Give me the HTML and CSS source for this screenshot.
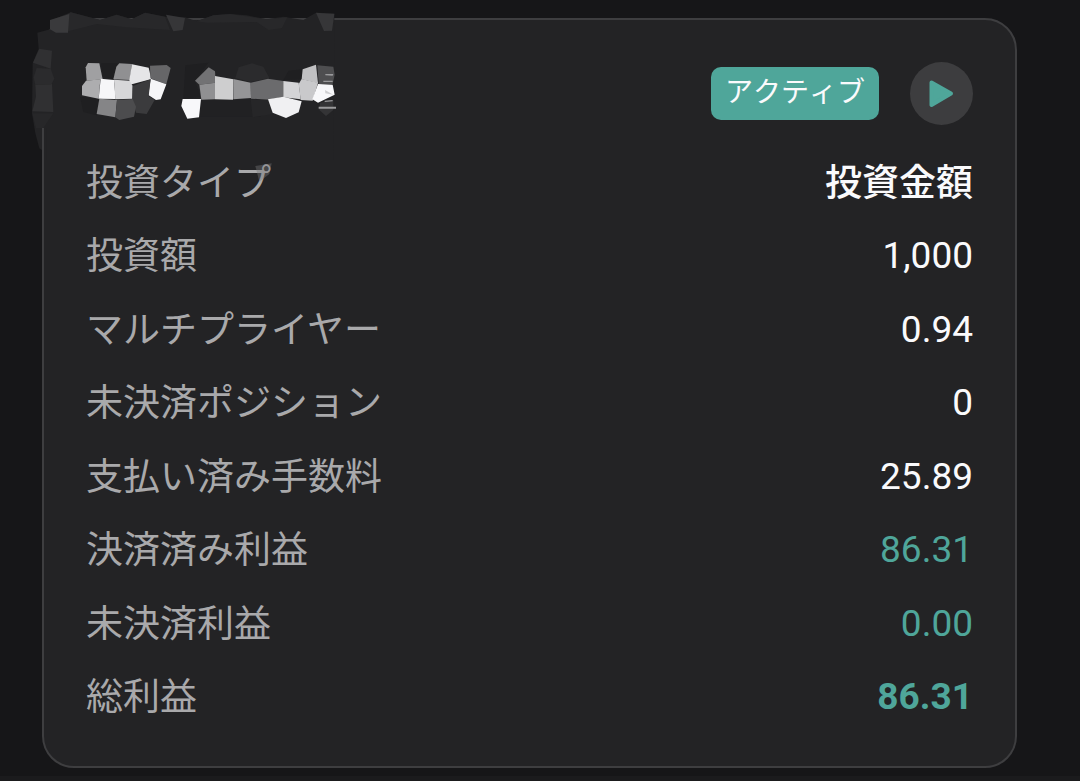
FILE: index.html
```html
<!DOCTYPE html>
<html lang="ja">
<head>
<meta charset="utf-8">
<meta name="viewport" content="width=device-width, initial-scale=1">
<title>投資</title>
<link rel="stylesheet" href="styles.css">
</head>
<body>
<main class="page">
  <section class="card">
    <header class="card-header">
      <span class="badge">アクティブ</span>
      <button class="play" type="button" aria-label="開始">
        <svg class="play-icon" viewBox="0 0 63 63" aria-hidden="true"><path d="M21.500 20.500 L41 31.500 L21.500 43 Z"/></svg>
      </button>
    </header>
    <dl class="details">
      <dt>投資タイプ</dt><dd class="strong">投資金額</dd>
      <dt>投資額</dt><dd>1,000</dd>
      <dt>マルチプライヤー</dt><dd>0.94</dd>
      <dt>未決済ポジション</dt><dd>0</dd>
      <dt>支払い済み手数料</dt><dd>25.89</dd>
      <dt>決済済み利益</dt><dd class="gain">86.31</dd>
      <dt>未決済利益</dt><dd class="gain">0.00</dd>
      <dt>総利益</dt><dd class="gain total">86.31</dd>
    </dl>
  </section>
  <svg class="mosaic" viewBox="0 0 1080 630" aria-hidden="true">
    <path fill="#232325" d="M150 62 L212 37 L300 60 L350 44 L395 58 L435 38 L495 50 L555 52 L590 64 L640 46 L690 42 L740 46 L800 58 L850 50 L910 60 L948 38 L1003 40 L1003 110 L1000 480 L140 480 L140 384 L126 384 L126 450 L118 445 L106 400 L96 340 L98 190 L116 146 L112 98 L150 88 Z"/>
    <path fill="#28282a" d="M200 44 L212 37 L300 60 L350 44 L395 58 L435 38 L495 50 L510 90 L380 82 L290 72 L205 94 Z M590 64 L640 46 L690 42 L800 58 L862 52 L846 84 L806 90 L770 66 L620 68 Z"/>
    <path fill="#3a3a3c" d="M150 60 L208 42 L204 98 L168 98 L150 88 Z"/>
    <path fill="#363638" d="M498 44 L555 54 L548 90 L520 94 Z M948 38 L1003 42 L996 92 L972 93 Z"/>
    <path fill="#303032" d="M118 146 L156 152 L152 206 L99 188 Z M106 254 L156 252 L160 336 L97 334 L108 290 Z"/>
    <path fill="#2b2b2d" d="M110 204 L152 206 L163 236 L154 254 L106 254 L101 232 Z"/>
    <path fill="#272729" d="M97 340 L160 340 L130 384 L108 384 Z"/>
    <path fill="#1f1f21" d="M240 290 L298 296 L290 346 L250 336 Z M304 190 L352 190 L340 238 L308 230 Z M556 196 L625 188 L585 242 L602 290 L550 296 Z M866 212 L908 208 L905 238 L850 240 Z"/>
    <path fill="#212123" d="M706 296 L808 298 L780 350 L600 350 L604 300 Z"/>
    <path fill="#2b2b2d" d="M716 202 L756 190 L790 200 L808 234 L752 246 L706 234 Z"/>
    <path fill="#262628" d="M752 298 L804 300 L820 342 L758 352 Z"/>
    <path fill="#a0a0a2" d="M264 189 L298 190 L308 238 L260 242 L257 202 Z"/>
    <path fill="#adadaf" d="M258 242 L301 238 L296 296 L246 286 L246 258 Z"/>
    <path fill="#909092" d="M358 190 L396 192 L390 240 L340 238 L349 200 Z"/>
    <path fill="#e5e5e7" d="M396 193 L446 203 L454 237 L390 254 L388 240 Z"/>
    <path fill="#666668" d="M450 197 L500 195 L512 204 L499 253 L451 235 Z"/>
    <path fill="#f6f6f8" d="M302 236 L342 240 L347 297 L296 296 Z M452 236 L499 253 L482 298 L468 300 L445 285 Z"/>
    <path fill="#d7d7d9" d="M342 239 L389 242 L398 258 L397 296 L346 298 Z"/>
    <path fill="#3b3b3d" d="M398 258 L452 238 L446 288 L464 300 L440 342 L408 338 L397 296 Z"/>
    <path fill="#858587" d="M298 296 L351 300 L346 352 L290 342 Z"/>
    <path fill="#4c4c4e" d="M351 300 L398 297 L408 320 L402 350 L358 360 L346 352 Z"/>
    <path fill="#727274" d="M626 202 L645 214 L647 248 L598 254 L585 242 Z"/>
    <path fill="#909092" d="M598 254 L646 248 L645 298 L604 299 Z"/>
    <path fill="#cececf" d="M645 228 L700 238 L699 299 L645 298 Z"/>
    <path fill="#959597" d="M700 237 L752 248 L753 294 L700 298 Z"/>
    <path fill="#6b6b6d" d="M752 248 L804 236 L850 243 L850 290 L806 299 L753 296 Z"/>
    <path fill="#d4d4d6" d="M850 243 L896 248 L902 298 L850 292 Z"/>
    <path fill="#c0c0c2" d="M908 208 L948 194 L954 250 L905 238 Z"/>
    <path fill="#c9c9cb" d="M905 237 L954 248 L938 302 L902 300 L896 252 Z"/>
    <path fill="#4e4e50" d="M952 196 L1000 200 L1004 224 L998 252 L956 252 Z"/>
    <path fill="#f8f8fa" d="M548 297 L603 297 L597 352 L562 356 L544 318 Z M954 252 L998 254 L1004 284 L954 308 L937 298 Z"/>
    <path fill="#f0f0f2" d="M804 298 L850 290 L905 304 L896 337 L858 354 L818 338 Z"/>
    <path fill="#d0d0d2" d="M975 270 L1000 284 L976 280 Z"/>
    <path fill="#343436" d="M960 308 L1000 300 L1000 330 L978 348 L958 330 Z"/>
    <path fill="#9a9a9c" d="M970 242 L998 242 L998 246 L970 246 Z M956 320 L1008 320 L1008 326 L956 326 Z M976 222 L1000 222 L998 227 L976 226 Z M974 302 L998 300 L998 304 L974 306 Z"/>
    <path fill="#77777a" opacity="0.400" d="M766 498 L815 490 L808 522 L778 545 Z"/>
  </svg>
  <div class="next-card"></div>
</main>
</body>
</html>
```
FILE: styles.css
```css
* {
  box-sizing: border-box;
}

body {
  margin: 0;
  background: #161618;
  color: #fafafc;
  font-family: Roboto, "Noto Sans CJK JP", sans-serif;
}

.page {
  position: relative;
  display: flex;
  flex-direction: column;
  min-height: 100vh;
  padding-top: 18px;
}

.card {
  margin: 0 63px 8px 42px;
  padding: 42px 42px 32px;
  border: 2px solid #3e3e40;
  border-radius: 32px;
  background: #232325;
}

.card-header {
  display: flex;
  align-items: center;
  justify-content: flex-end;
  gap: 31px;
  margin-bottom: 21px;
}

.badge {
  padding: 6px 14px 7px;
  border-radius: 10px;
  background: #4fa69a;
  font-size: 28px;
  font-kerning: none;
  line-height: 40px;
}

.play {
  width: 63px;
  height: 63px;
  padding: 0;
  border: 0;
  border-radius: 50%;
  background: #3d3d3f;
}

.play-icon {
  display: block;
  fill: #4fa69a;
  stroke: #4fa69a;
  stroke-width: 4;
  stroke-linejoin: round;
}

.details {
  display: grid;
  grid-template-columns: auto auto;
  align-items: center;
  min-height: 588px;
  margin: 0;
  font-size: 37px;
  line-height: 56px;
}

.details dt {
  padding-top: 2px;
  color: #a9a9ab;
}

.details dd {
  margin: 0;
  text-align: right;
}

.details .strong {
  padding-top: 2px;
  font-weight: 500;
}

.details .gain {
  color: #4fa69a;
}

.details .total {
  font-weight: 700;
}

.mosaic {
  position: absolute;
  top: 0;
  left: 0;
  width: 360px;
  height: 210px;
  pointer-events: none;
}

.next-card {
  flex: 1;
  min-height: 5px;
  background: #1b1b1d;
}
```
